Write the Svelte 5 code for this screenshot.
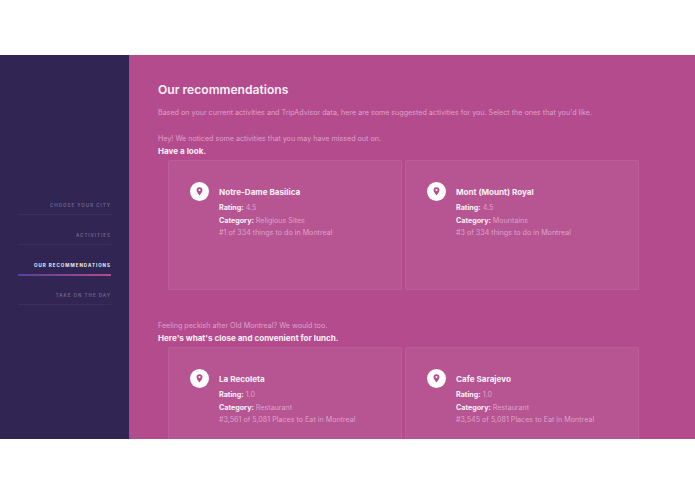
<script>
	const nav = [
		{ label: 'Choose your city' },
		{ label: 'Activities' },
		{ label: 'Our recommendations', active: true },
		{ label: 'Take on the day' },
	];

	const sections = [
		{
			intro: 'Hey! We noticed some activities that you may have missed out on.',
			lead: 'Have a look.',
			places: [
				{ name: 'Notre-Dame Basilica', rating: '4.5', category: 'Religious Sites', rank: '#1 of 334 things to do in Montreal' },
				{ name: 'Mont (Mount) Royal', rating: '4.5', category: 'Mountains', rank: '#3 of 334 things to do in Montreal' },
			],
		},
		{
			intro: 'Feeling peckish after Old Montreal? We would too.',
			lead: "Here's what's close and convenient for lunch.",
			places: [
				{ name: 'La Recoleta', rating: '1.0', category: 'Restaurant', rank: '#3,561 of 5,081 Places to Eat in Montreal' },
				{ name: 'Cafe Sarajevo', rating: '1.0', category: 'Restaurant', rank: '#3,545 of 5,081 Places to Eat in Montreal' },
			],
		},
	];
</script>

<div class="page">
	<div class="app">
		<aside class="sidebar">
			{#each nav as item}
				<div class="nav-item" class:active={item.active}>{item.label}</div>
			{/each}
		</aside>

		<main class="main">
			<h1>Our recommendations</h1>
			<p class="subtitle">Based on your current activities and TripAdvisor data, here are some suggested activities for you. Select the ones that you'd like.</p>

			{#each sections as section}
				<section class="section">
					<p class="intro">{section.intro}</p>
					<p class="lead">{section.lead}</p>
					<div class="cards">
						{#each section.places as place}
							<div class="card">
								<div class="pin">
									<svg width="7" height="9" viewBox="0 0 8 10">
										<path fill-rule="evenodd" fill="#b44b8d" d="M4 0a3.4 3.4 0 0 1 3.4 3.4C7.4 5.5 5 8 4 9.6 3 8 .6 5.5 .6 3.4A3.4 3.4 0 0 1 4 0zm0 2.200a1.200 1.200 0 1 0 0 2.400 1.200 1.200 0 0 0 0-2.400z" />
									</svg>
								</div>
								<div class="info">
									<h2>{place.name}</h2>
									<p><b>Rating:</b> {place.rating}</p>
									<p><b>Category:</b> {place.category}</p>
									<p>{place.rank}</p>
								</div>
							</div>
						{/each}
					</div>
				</section>
			{/each}
		</main>
	</div>
</div>

<style>
	:global(body) {
		margin: 0;
		background: #fff;
	}

	.page {
		height: 494px;
		padding: 55px 0;
		box-sizing: border-box;
		font-family: Inter, "Liberation Sans", sans-serif;
	}

	.app {
		display: flex;
		height: 384px;
		overflow: hidden;
	}

	.sidebar {
		width: 129px;
		flex-shrink: 0;
		padding: 147px 18px 0;
		box-sizing: border-box;
		background: #302553;
	}

	.nav-item {
		margin-bottom: 17px;
		padding-bottom: 4px;
		line-height: 8px;
		text-align: right;
		text-transform: uppercase;
		font-size: 4.5px;
		font-weight: 600;
		letter-spacing: 1px;
		color: #75698f;
		border-bottom: 1px solid #3a3060;
	}

	.nav-item.active {
		margin-bottom: 16px;
		color: #f4eff6;
		font-weight: 700;
		border-bottom: 2px solid;
		border-image: linear-gradient(90deg, #54409a, #b44b8d) 1;
	}

	.main {
		flex: 1;
		padding: 27px 56px 0 29px;
		background: #b44b8d;
		color: #dda2ca;
		font-size: 7.15px;
	}

	h1 {
		margin: 0;
		font-size: 12.1px;
		line-height: 16px;
		font-weight: 600;
		color: #fbf2f8;
	}

	p {
		margin: 0;
	}

	.subtitle {
		margin-top: 9px;
		line-height: 12px;
		white-space: nowrap;
	}

	.section {
		margin-top: 14px;
	}

	.section + .section {
		margin-top: 30px;
	}

	.intro {
		line-height: 12px;
	}

	.lead {
		line-height: 13px;
		font-size: 8.1px;
		font-weight: 700;
		color: #fbf2f8;
	}

	.cards {
		display: flex;
		gap: 3px;
		margin: 2px 0 0 10px;
	}

	.card {
		display: flex;
		gap: 10px;
		width: 234px;
		height: 130px;
		padding: 21px 21px;
		box-sizing: border-box;
		background: rgba(255, 255, 255, 0.05);
		border: 1px solid rgba(255, 255, 255, 0.06);
		border-radius: 2px;
	}

	.pin {
		display: flex;
		align-items: center;
		justify-content: center;
		width: 19px;
		height: 19px;
		flex-shrink: 0;
		border-radius: 50%;
		background: #fff;
	}

	.info {
		padding-top: 4px;
	}

	h2 {
		margin: 0 0 3px;
		font-size: 8.1px;
		line-height: 13px;
		font-weight: 700;
		color: #fbf2f8;
	}

	.info p {
		line-height: 12.5px;
	}

	b {
		font-weight: 700;
		color: #fbf2f8;
	}
</style>
